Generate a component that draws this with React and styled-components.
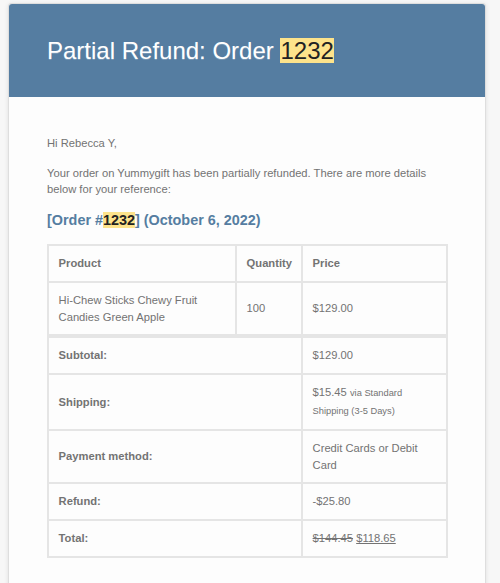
import React from "react";
import styled, { createGlobalStyle } from "styled-components";

const GlobalStyle = createGlobalStyle`
  html, body {
    margin: 0;
    padding: 0;
    background: #f7f7f7;
    font-family: "Liberation Sans", Arial, Helvetica, sans-serif;
  }
`;

const Page = styled.div`
  padding: 3px 14px 0 8px;
`;

const Container = styled.div`
  width: 478px;
  box-sizing: border-box;
  background: #fdfdfd;
  border: 1px solid #dedede;
  border-radius: 3px;
  box-shadow: 0 1px 4px rgba(0, 0, 0, 0.1);
`;

const Header = styled.div`
  background: #557da1;
  border-radius: 3px 3px 0 0;
  padding: 28.5px 38px;
`;

const Title = styled.h1`
  margin: 0;
  color: #ffffff;
  font-size: 24px;
  font-weight: 300;
  line-height: 36px;
  text-shadow: 0 1px 0 #7797b4;
`;

const Highlight = styled.mark`
  background: #fde38b;
  color: #222;
  text-shadow: none;
  display: inline-block;
  line-height: ${(p) => p.$lh};
`;

const Body = styled.div`
  padding: 38px 38px 40px;
`;

const Para = styled.p`
  margin: 0 0 12.8px;
  font-size: 11.2px;
  line-height: 16.8px;
  color: #737373;
`;

const SubHeading = styled.h2`
  margin: 0 0 14.4px;
  color: #557da1;
  font-size: 14.4px;
  font-weight: bold;
  line-height: 18.7px;
`;

const Table = styled.table`
  width: 399px;
  table-layout: fixed;
  border-collapse: separate;
  border-spacing: 0;
  border: 1px solid #e5e5e5;
  color: #737373;
  font-size: 11.2px;
  line-height: 16.8px;
`;

const HeadCell = styled.th`
  text-align: left;
  font-weight: bold;
  padding: 9px 9.6px;
  border: 1px solid #e5e5e5;
  border-top-width: ${(p) => (p.$thick ? "3px" : "1px")};
  vertical-align: middle;
`;

const Cell = styled.td`
  text-align: left;
  padding: 9px 9.6px;
  border: 1px solid #e5e5e5;
  border-top-width: ${(p) => (p.$thick ? "3px" : "1px")};
  vertical-align: middle;
`;

const Small = styled.small`
  font-size: 9.3px;
`;

const Struck = styled.del`
  color: #737373;
`;

const Inserted = styled.ins`
  color: #737373;
`;

const totals = [
  { label: "Subtotal:", value: "$129.00" },
  {
    label: "Shipping:",
    value: (
      <>
        $15.45 <Small>via Standard Shipping (3-5 Days)</Small>
      </>
    ),
  },
  { label: "Payment method:", value: "Credit Cards or Debit Card" },
  { label: "Refund:", value: "-$25.80" },
  {
    label: "Total:",
    value: (
      <>
        <Struck>$144.45</Struck> <Inserted>$118.65</Inserted>
      </>
    ),
  },
];

export default function App() {
  return (
    <>
      <GlobalStyle />
      <Page>
        <Container>
          <Header>
            <Title>
              Partial Refund: Order <Highlight $lh="25px">1232</Highlight>
            </Title>
          </Header>
          <Body>
            <Para>Hi Rebecca Y,</Para>
            <Para>
              Your order on Yummygift has been partially refunded. There are
              more details below for your reference:
            </Para>
            <SubHeading>
              [Order #<Highlight $lh="16px">1232</Highlight>] (October 6, 2022)
            </SubHeading>
            <Table>
              <colgroup>
                <col style={{ width: 188 }} />
                <col style={{ width: 66 }} />
                <col style={{ width: 145 }} />
              </colgroup>
              <thead>
                <tr>
                  <HeadCell>Product</HeadCell>
                  <HeadCell>Quantity</HeadCell>
                  <HeadCell>Price</HeadCell>
                </tr>
              </thead>
              <tbody>
                <tr>
                  <Cell>Hi-Chew Sticks Chewy Fruit Candies Green Apple</Cell>
                  <Cell>100</Cell>
                  <Cell>$129.00</Cell>
                </tr>
              </tbody>
              <tfoot>
                {totals.map((t, i) => (
                  <tr key={t.label}>
                    <HeadCell colSpan={2} $thick={i === 0}>
                      {t.label}
                    </HeadCell>
                    <Cell $thick={i === 0}>{t.value}</Cell>
                  </tr>
                ))}
              </tfoot>
            </Table>
          </Body>
        </Container>
      </Page>
    </>
  );
}
